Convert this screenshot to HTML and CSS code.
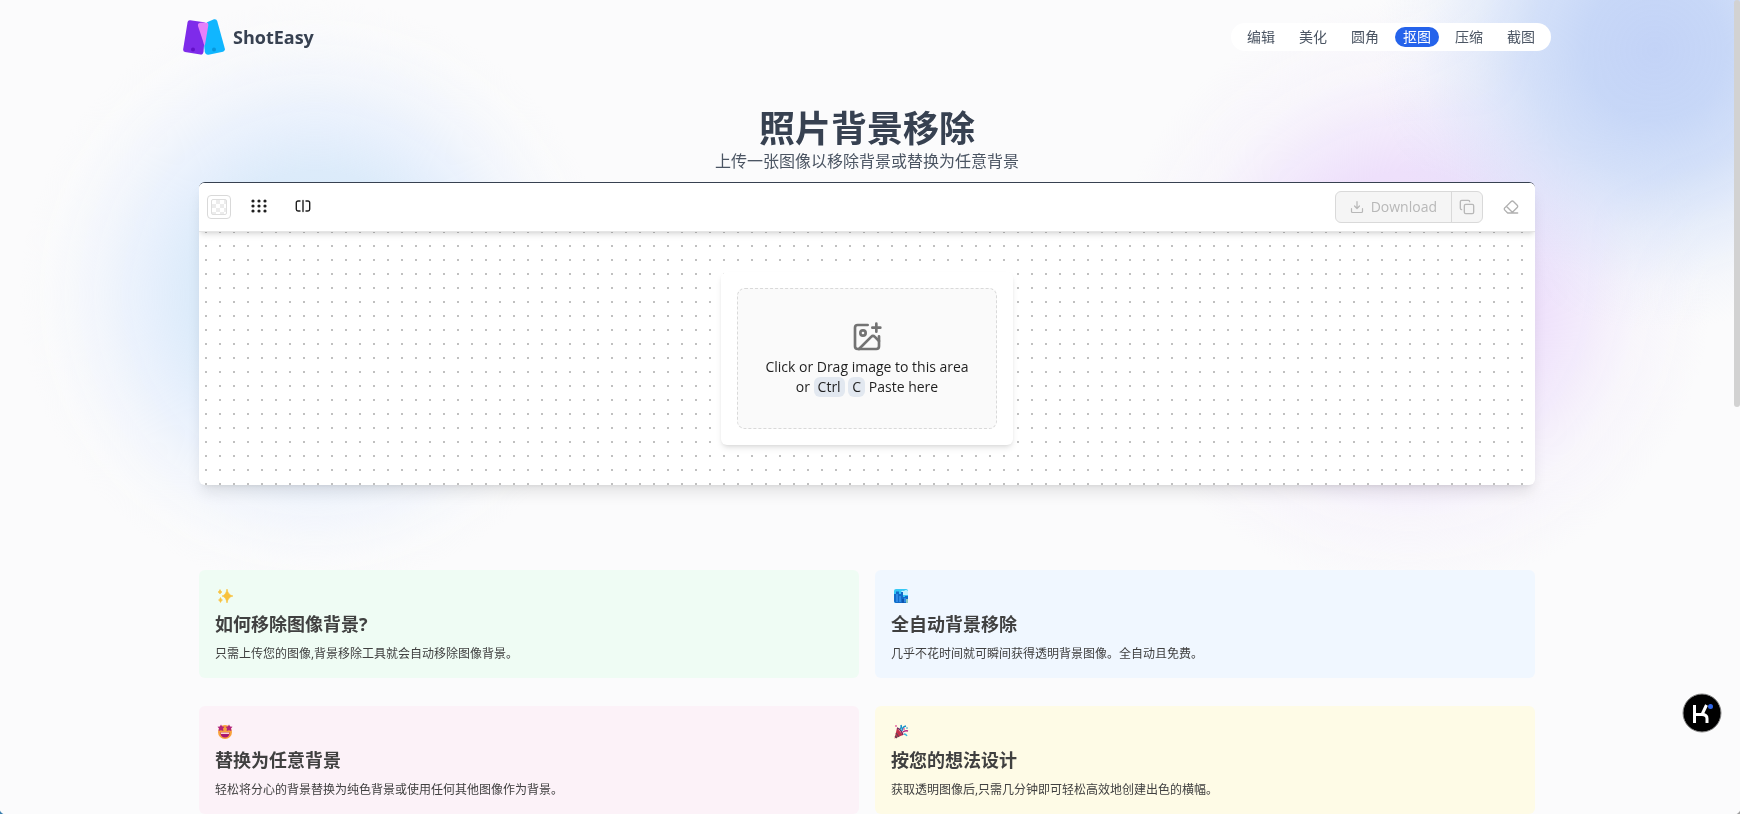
FILE: index.html
```
<!DOCTYPE html>
<html lang="zh-CN">
<head>
<meta charset="UTF-8">
<meta name="viewport" content="width=device-width, initial-scale=1.0">
<title>ShotEasy</title>
<link rel="stylesheet" href="styles.css">
</head>
<body>

<div class="glow glow-sky"></div>
<div class="glow glow-purple"></div>
<div class="glow glow-blue"></div>

<div class="page">
  <header class="header">
    <a class="brand" href="#">
      <svg class="logo" viewBox="0 0 42 36" aria-hidden="true">
        <path d="M7.200 1.300 L21 3.300 Q23 3.700 22.700 6 L20.500 33 Q20 36 17.500 35.600 L2 33 Q-.2 32.500 .2 30 L4.600 3 Q5 1 7.200 1.300Z" fill="#7e2bea"/>
        <path d="M24 3.200 L31 .3 Q33.500-.3 34.200 2 L41.800 29.500 Q42.300 32 40 32.800 L25.500 35.700 Q22.500 36.200 21.800 33 L21 25Z" fill="#10b6ff"/>
        <path d="M17 3.800 Q21 3 24.500 3.800 Q25.600 4.200 25.300 6.500 L21.800 27 Q20.500 25 19.800 21.500 L15 7 Q14.500 4.300 17 3.800Z" fill="#e580fb"/>
        <circle cx="10" cy="30.500" r="2" fill="#6210c8"/>
        <circle cx="31" cy="30.500" r="2" fill="#0896dc"/>
      </svg>
      <span>ShotEasy</span>
    </a>
    <nav class="nav">
      <a href="#">编辑</a>
      <a href="#">美化</a>
      <a href="#">圆角</a>
      <a class="active" href="#">抠图</a>
      <a href="#">压缩</a>
      <a href="#">截图</a>
    </nav>
  </header>

  <main class="main">
    <div class="intro">
      <h1>照片背景移除</h1>
      <p>上传一张图像以移除背景或替换为任意背景</p>
    </div>

    <section class="editor">
      <div class="toolbar">
        <div class="tools">
          <button class="swatch" type="button" aria-label="Background"><span></span></button>
          <button class="tool" type="button" aria-label="Grid">
            <svg width="16" height="16" viewBox="0 0 16 16" fill="#1f1f1f">
              <circle cx="2" cy="2" r="1.600"/><circle cx="8" cy="2" r="1.600"/><circle cx="14" cy="2" r="1.600"/>
              <circle cx="2" cy="7" r="1.600"/><circle cx="8" cy="7" r="1.600"/><circle cx="14" cy="7" r="1.600"/>
              <circle cx="2" cy="12" r="1.600"/><circle cx="8" cy="12" r="1.600"/><circle cx="14" cy="12" r="1.600"/>
            </svg>
          </button>
          <button class="tool" type="button" aria-label="Compare">
            <svg width="16" height="16" viewBox="0 0 16 16" fill="none" stroke="#1f1f1f" stroke-width="1.400" stroke-linecap="round" stroke-linejoin="round">
              <path d="M5 2H3a1.700 1.700 0 0 0-1.700 1.700v6.600A1.700 1.700 0 0 0 3 12h2M11 2h2a1.700 1.700 0 0 1 1.700 1.700v6.600A1.700 1.700 0 0 1 13 12h-2M8 1.500v11"/>
            </svg>
          </button>
        </div>
        <div class="actions">
          <div class="btn-group">
            <button class="download" type="button" disabled>
              <svg width="14" height="14" viewBox="0 0 14 14" fill="none" stroke="currentColor" stroke-width="1.200" stroke-linecap="round" stroke-linejoin="round">
                <path d="M7 1.500v7M4.500 6L7 8.500 9.500 6M1.500 8.500v3a1 1 0 0 0 1 1h9a1 1 0 0 0 1-1v-3"/>
              </svg>
              Download
            </button>
            <button class="copy" type="button" aria-label="Copy" disabled>
              <svg width="16" height="16" viewBox="0 0 24 24" fill="none" stroke="currentColor" stroke-width="2" stroke-linecap="round" stroke-linejoin="round">
                <rect x="8" y="8" width="14" height="14" rx="2"/>
                <path d="M4 16c-1.100 0-2-.9-2-2V4c0-1.100.9-2 2-2h10c1.100 0 2 .9 2 2"/>
              </svg>
            </button>
          </div>
          <button class="tool muted" type="button" aria-label="Clear" disabled>
            <svg width="16" height="16" viewBox="0 0 24 24" fill="none" stroke="currentColor" stroke-width="2" stroke-linecap="round" stroke-linejoin="round">
              <path d="m7 21-4.300-4.300c-1-1-1-2.500 0-3.400l9.600-9.600c1-1 2.500-1 3.400 0l5.600 5.600c1 1 1 2.500 0 3.400L13 21M22 21H7M5 11l9 9"/>
            </svg>
          </button>
        </div>
      </div>

      <div class="canvas">
        <div class="upload">
          <button class="dropzone" type="button">
            <svg width="32" height="32" viewBox="0 0 24 24" fill="none" stroke="#737373" stroke-width="2" stroke-linecap="round" stroke-linejoin="round">
              <path d="M16 5h6M19 2v6M21 11.500V19a2 2 0 0 1-2 2H5a2 2 0 0 1-2-2V5a2 2 0 0 1 2-2h7.500"/>
              <path d="m21 15-3.086-3.086a2 2 0 0 0-2.828 0L6 21"/>
              <circle cx="9" cy="9" r="2"/>
            </svg>
            <span>Click or Drag image to this area</span>
            <span>or <kbd>Ctrl</kbd> <kbd>C</kbd> Paste here</span>
          </button>
        </div>
      </div>
    </section>

    <section class="features">
      <article class="card green">
        <svg class="emoji" viewBox="0 0 20 20" aria-hidden="true">
          <path d="M12 3Q13 9 18 10Q13 11 12 17Q11 11 7 10Q11 9 12 3ZM5 3.500Q5.500 5.500 7 6Q5.500 6.500 5 8Q4.500 6.500 3 6Q4.500 5.500 5 3.500ZM5.500 11.500Q6 13.500 7.500 14Q6 14.500 5.500 16.500Q5 14.500 3.500 14Q5 13.500 5.500 11.500Z" fill="#f8c13c" stroke="#f8c13c" stroke-width=".6"/>
        </svg>
        <h2>如何移除图像背景?</h2>
        <p>只需上传您的图像,背景移除工具就会自动移除图像背景。</p>
      </article>
      <article class="card sky">
        <svg class="emoji" viewBox="0 0 20 20" aria-hidden="true">
          <rect x="3" y="3" width="14" height="14" rx="2" fill="#35c8f5"/>
          <path d="M10 6q1-2 3-1q2-2 4 0v4h-7Z" fill="#c3f2ff"/>
          <path d="M3 8h2V5.500h3V8h2V6h2v5h2v-1h3v5q0 2-2 2H5q-2 0-2-2Z" fill="#126bc9"/>
          <path d="M6 8v8M9 10v6M14 12v4" stroke="#4ba9ff" stroke-width="1"/>
          <path d="M12 13v4" stroke="#083f91" stroke-width="1"/>
          <path d="M15 13h2v4h-2Z" fill="#8dc9c0"/>
        </svg>
        <h2>全自动背景移除</h2>
        <p>几乎不花时间就可瞬间获得透明背景图像。全自动且免费。</p>
      </article>
      <article class="card pink">
        <svg class="emoji" viewBox="0 0 20 20" aria-hidden="true">
          <circle cx="10" cy="10" r="7" fill="#f9a13b"/>
          <path d="M6 2.500l1.200 2 2.300.3-1.500 1.800.4 2.400L6 8.200 3.600 9 4 6.600 2.500 4.800l2.300-.3ZM14 2.500l1.200 2 2.300.3L16 6.600l.4 2.400-2.400-.8-2.400.8.400-2.400-1.500-1.800 2.300-.3Z" fill="#b3247a"/>
          <path d="M5.500 10.500h9q0 5-4.500 5t-4.500-5Z" fill="#a91570"/>
          <path d="M6 10.500h8v1.500H6Z" fill="#f9d5d0"/>
        </svg>
        <h2>替换为任意背景</h2>
        <p>轻松将分心的背景替换为纯色背景或使用任何其他图像作为背景。</p>
      </article>
      <article class="card yellow">
        <svg class="emoji" viewBox="0 0 20 20" aria-hidden="true">
          <path d="M6 6l6 7-8.500 3.500Z" fill="#c42f4b"/>
          <path d="M5 11l3 4M4 14l2 2" stroke="#5c4a55" stroke-width="1.200"/>
          <path d="M6 6q4 1 6 7" stroke="#782b62" stroke-width="1.500" fill="none"/>
          <path d="M9 7q2-1 1-4M11 9q0-4 4-5" stroke="#168fc8" stroke-width="1.500" fill="none"/>
          <path d="M12 10q2-2 5-1" stroke="#b52583" stroke-width="1.500" fill="none"/>
          <path d="M13 12q2 0 3 2" stroke="#35b6dd" stroke-width="1.300" fill="none"/>
          <circle cx="5" cy="4" r=".9" fill="#e4599b"/><circle cx="13" cy="7" r=".9" fill="#e4599b"/><circle cx="16" cy="6" r=".8" fill="#2a91c7"/>
        </svg>
        <h2>按您的想法设计</h2>
        <p>获取透明图像后,只需几分钟即可轻松高效地创建出色的横幅。</p>
      </article>
    </section>
  </main>
</div>

<button class="badge" type="button" aria-label="Assistant">
  <svg width="40" height="40" viewBox="0 0 40 40">
    <circle cx="20" cy="20" r="19" fill="#000" stroke="#8a8a8a"/>
    <path d="M12.500 12v18M12.500 21.500h8M24.500 12L20 21.500Q25 21.500 25 25.500V30" fill="none" stroke="#fff" stroke-width="3"/>
    <circle cx="28.500" cy="13.500" r="2.500" fill="#2f66e8"/>
  </svg>
</button>
<div class="scrollbar"></div>
<div class="corner corner-left"></div>
<div class="corner corner-right"></div>

</body>
</html>
```
FILE: styles.css
```
* {
  box-sizing: border-box;
}

body {
  margin: 0;
  padding-right: 6px;
  height: 100vh;
  overflow: hidden;
  background-color: #fbfbfc;
  font-family: "Open Sans", "Noto Sans CJK SC", sans-serif;
  font-size: 14px;
  line-height: 20px;
  color: #374151;
}

h1,
h2,
p {
  margin: 0;
}

button {
  padding: 0;
  border: 0;
  background: none;
  font: inherit;
  color: inherit;
}

button svg {
  display: block;
}

/* soft colour spots behind the page */
.glow {
  position: fixed;
  z-index: -1;
  border-radius: 50%;
}

.glow-sky {
  left: 20px;
  top: 0;
  width: 590px;
  height: 590px;
  background: radial-gradient(closest-side, #d3e8fb 0%, #dcebfa 42%, rgba(228, 238, 252, 0.9) 56%, rgba(238, 243, 252, 0.6) 75%, rgba(248, 250, 252, 0.3) 90%, rgba(251, 251, 252, 0) 100%);
}

.glow-purple {
  left: 1110px;
  top: 0;
  width: 600px;
  height: 590px;
  background: radial-gradient(closest-side, #ecdcfb 0%, #eee0fb 42%, rgba(240, 230, 251, 0.8) 58%, rgba(245, 240, 251, 0.5) 75%, rgba(251, 251, 252, 0) 100%);
}

.glow-blue {
  left: 1375px;
  top: -230px;
  width: 560px;
  height: 560px;
  background: radial-gradient(closest-side, #c3d3f7 0%, rgba(196, 213, 247, 0.95) 25%, rgba(198, 215, 247, 0.75) 45%, rgba(203, 219, 248, 0.42) 65%, rgba(212, 225, 249, 0.14) 84%, rgba(220, 230, 250, 0) 100%);
}

.page {
  max-width: 1400px;
  margin: 0 auto;
  padding: 0 16px;
}

.header {
  display: flex;
  align-items: center;
  justify-content: space-between;
  height: 74px;
}

.brand {
  display: flex;
  align-items: center;
  gap: 8px;
  color: #374151;
  font-size: 18px;
  font-weight: 700;
  line-height: 28px;
  text-decoration: none;
}

.logo {
  width: 42px;
  height: 36px;
}

.nav {
  display: flex;
  gap: 8px;
  padding: 4px 8px;
  border-radius: 14px;
  background: #fff;
}

.nav a {
  padding: 0 8px;
  border-radius: 10px;
  color: #4b5563;
  text-decoration: none;
}

.nav .active {
  background: #2563eb;
  color: #fff;
}

.main {
  padding: 35px 16px 0;
}

.intro {
  padding-bottom: 9px;
  text-align: center;
}

.intro h1 {
  font-size: 36px;
  font-weight: 700;
  line-height: 40px;
}

.intro p {
  color: #4b5563;
  font-size: 16px;
  line-height: 24px;
}

.editor {
  overflow: hidden;
  border-top: 1px solid #374151;
  border-radius: 6px;
  background: #fff radial-gradient(circle, #c0c0c0 1px, transparent 1px) 0 0 / 14px 14px;
  box-shadow: 0 10px 15px -3px rgba(0, 0, 0, 0.1), 0 4px 6px -4px rgba(0, 0, 0, 0.1);
}

.toolbar {
  display: flex;
  align-items: center;
  justify-content: space-between;
  height: 49px;
  padding: 0 8px;
  border-bottom: 1px solid #e5e5e5;
  background: #fff;
  box-shadow: 0 4px 6px -1px rgba(0, 0, 0, 0.1), 0 2px 4px -2px rgba(0, 0, 0, 0.1);
}

.tools,
.actions {
  display: flex;
  align-items: center;
  gap: 12px;
}

.swatch {
  width: 24px;
  height: 24px;
  padding: 3px;
  border: 1px solid #d9d9d9;
  border-radius: 4px;
}

.swatch span {
  display: block;
  height: 16px;
  border: 1px solid #dedede;
  border-radius: 2px;
  background: repeating-conic-gradient(#ececec 0% 25%, #fff 0% 50%) 0 0 / 8px 8px;
}

.tool {
  display: grid;
  place-items: center;
  width: 32px;
  height: 32px;
}

.muted {
  color: #b0b0b0;
}

.btn-group {
  display: flex;
  height: 32px;
  border: 1px solid #d9d9d9;
  border-radius: 6px;
  background: #f5f5f5;
  color: #b8b8b8;
}

.download {
  display: flex;
  align-items: center;
  gap: 7px;
  padding: 0 14px;
}

.copy {
  padding: 0 7px;
  border-left: 1px solid #d9d9d9;
}

.canvas {
  display: flex;
  justify-content: center;
  padding: 40px 16px;
}

.upload {
  width: 292px;
  padding: 16px;
  border-radius: 6px;
  background: #fff;
  box-shadow: 0 4px 6px -1px rgba(0, 0, 0, 0.1), 0 2px 4px -2px rgba(0, 0, 0, 0.1);
}

.dropzone {
  display: flex;
  flex-direction: column;
  align-items: center;
  width: 100%;
  padding: 32px 16px 31px;
  border: 1px dashed #d9d9d9;
  border-radius: 8px;
  background: #fafafa;
  color: #1f1f1f;
}

.dropzone svg {
  margin-bottom: 4px;
}

kbd {
  display: inline-block;
  padding: 0 4px;
  border-radius: 6px;
  background: #e2e8f0;
  font-family: inherit;
}

.features {
  display: grid;
  grid-template-columns: 1fr 1fr;
  gap: 28px 16px;
  padding-top: 85px;
}

.card {
  padding: 16px;
  border-radius: 6px;
  color: #404040;
}

.green {
  background: #effcf4;
}

.sky {
  background: #f0f7ff;
}

.pink {
  background: #fcf2f8;
}

.yellow {
  background: #fefbe6;
}

.emoji {
  display: block;
  width: 20px;
  height: 20px;
}

.card h2 {
  margin: 4px 0 8px;
  font-size: 18px;
  font-weight: 700;
  line-height: 28px;
}

.card p {
  font-size: 12px;
  line-height: 16px;
}

.badge {
  position: fixed;
  right: 18px;
  bottom: 81px;
}

.scrollbar {
  position: fixed;
  top: 0;
  right: 0;
  width: 6px;
  height: 50vh;
  border-radius: 3px;
  background: #d2d2d2;
}

/* rounded lower corners of the window */
.corner {
  position: fixed;
  bottom: 0;
  width: 6px;
  height: 6px;
}

.corner-left {
  left: 0;
  background: radial-gradient(circle at 100% 0, transparent 6px, #3b7fae 7px);
}

.corner-right {
  right: 0;
  background: radial-gradient(circle at 0 0, transparent 6px, #a0a0a0 7px);
}
```
